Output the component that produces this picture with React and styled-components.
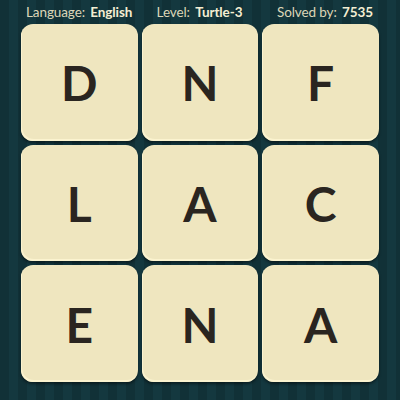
import React from 'react'
import styled, { createGlobalStyle } from 'styled-components'

const GlobalStyle = createGlobalStyle`
    html, body {
        margin: 0;
        padding: 0;
    }
    body {
        font-family: Lato, "Open Sans", sans-serif;
    }
`

const letters = ['D', 'N', 'F', 'L', 'A', 'C', 'E', 'N', 'A']

function App() {
    return (
        <>
            <GlobalStyle />
            <Board>
                <Header>
                    <Info align="start">Language: <strong>English</strong></Info>
                    <Info align="center">Level: <strong>Turtle-3</strong></Info>
                    <Info align="end">Solved by: <strong>7535</strong></Info>
                </Header>
                <Grid>
                    {letters.map((letter, i) => (
                        <Tile key={i}>{letter}</Tile>
                    ))}
                </Grid>
            </Board>
        </>
    )
}

export default App

const Board = styled.div`
    width: 400px;
    height: 400px;
    box-sizing: border-box;
    padding: 0 21px;
    background-color: #12333a;
    background-image: repeating-linear-gradient(
        90deg,
        #11313700 0px,
        #113137 0px,
        #113137 9px,
        #14383f 9px,
        #14383f 18px
    );
    overflow: hidden;
`

const Header = styled.div`
    height: 24px;
    display: grid;
    grid-template-columns: 1fr auto 1fr;
    align-items: center;
    padding: 0 6px 0 5px;
    color: #ddd6b8;
    font-size: 13.5px;
`

const Info = styled.div`
    justify-self: ${p => p.align};
    white-space: nowrap;
    letter-spacing: -0.1px;
    > strong {
        font-weight: 700;
        color: #f4eed3;
        margin-left: 2px;
    }
`

const Grid = styled.div`
    display: grid;
    grid-template-columns: repeat(3, 1fr);
    grid-auto-rows: 116.7px;
    gap: 4px;
`

const Tile = styled.div`
    display: flex;
    align-items: center;
    justify-content: center;
    background: #efe6bf;
    border-radius: 12px;
    box-shadow: inset 1px -2px 0 #fbf3cf, 0 2px 3px rgba(0, 0, 0, 0.45);
    color: #2a2520;
    font-family: Lato, "Open Sans", sans-serif;
    font-weight: 700;
    font-size: 48px;
    line-height: 1;
    padding-top: 2px;
`
